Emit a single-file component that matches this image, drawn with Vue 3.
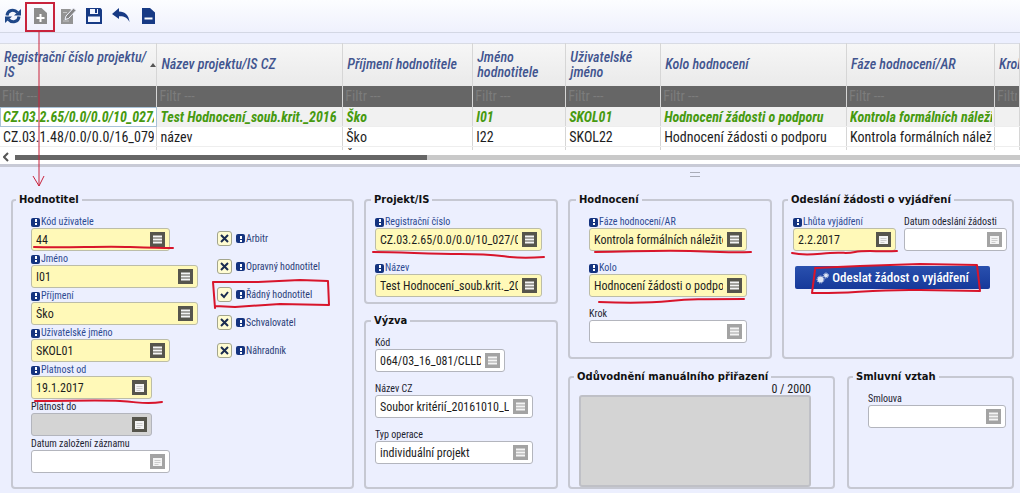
<script setup>
import { h, ref, reactive } from 'vue'

const columns = [
  { key: 'reg', title: 'Registrační číslo projektu/ IS', width: 157, sorted: true },
  { key: 'name', title: 'Název projektu/IS CZ', width: 186 },
  { key: 'surname', title: 'Příjmení hodnotitele', width: 130 },
  { key: 'first', title: 'Jméno hodnotitele', width: 93 },
  { key: 'user', title: 'Uživatelské jméno', width: 95 },
  { key: 'round', title: 'Kolo hodnocení', width: 186 },
  { key: 'phase', title: 'Fáze hodnocení/AR', width: 148 },
  { key: 'step', title: 'Krok', width: 25 }
]
const total = columns.reduce((sum, c) => sum + c.width, 0)

const rows = [
  { reg: 'CZ.03.2.65/0.0/0.0/10_027/0', name: 'Test Hodnocení_soub.krit._2016', surname: 'Ško', first: 'I01', user: 'SKOL01', round: 'Hodnocení žádosti o podporu', phase: 'Kontrola formálních náležitostí', step: '' },
  { reg: 'CZ.03.1.48/0.0/0.0/16_079/0', name: 'název', surname: 'Ško', first: 'I22', user: 'SKOL22', round: 'Hodnocení žádosti o podporu', phase: 'Kontrola formálních náležitostí', step: '' },
  { reg: '', name: '', surname: 'Ško', first: '', user: '', round: '', phase: '', step: '' }
]

const evaluator = [
  { id: 'kod', label: 'Kód uživatele', value: '44', required: true, size: 'm' },
  { id: 'jmeno', label: 'Jméno', value: 'I01', required: true, size: 'l' },
  { id: 'prijmeni', label: 'Příjmení', value: 'Ško', required: true, size: 'l' },
  { id: 'uziv', label: 'Uživatelské jméno', value: 'SKOL01', required: true, size: 'm' },
  { id: 'od', label: 'Platnost od', value: '19.1.2017', required: true, size: 's', icon: 'date' },
  { id: 'do', label: 'Platnost do', value: '', size: 's', icon: 'date', disabled: true },
  { id: 'zalozeni', label: 'Datum založení záznamu', value: '', size: 'm', icon: 'date' }
]

const roles = reactive([
  { id: 'arbitr', label: 'Arbitr', on: false },
  { id: 'opravny', label: 'Opravný hodnotitel', on: false },
  { id: 'radny', label: 'Řádný hodnotitel', on: true },
  { id: 'schval', label: 'Schvalovatel', on: false },
  { id: 'nahrad', label: 'Náhradník', on: false }
])

const reason = ref('')

const Flag = () => h('span', { class: 'flag', 'aria-hidden': 'true' }, [h('i'), h('i')])

const Field = (p) =>
  h('div', { class: ['field', 'size-' + p.size, { required: p.required, disabled: p.disabled }] }, [
    h('label', { for: p.id }, [p.required ? h(Flag) : null, p.label]),
    h('div', { class: 'box' }, [
      h('input', { id: p.id, type: 'text', value: p.value, disabled: p.disabled }),
      h('button', { type: 'button', 'aria-label': p.label, class: ['pick', p.icon === 'date' ? 'date' : 'list'] }, [
        h('svg', { viewBox: '0 0 15 15' }, p.icon === 'date'
          ? [h('path', { d: 'M3 4h9v8H3z', fill: '#f4f4f4' }), h('path', { d: 'M4.500 6.500h6M4.500 8.500h6M4.500 10.500h4', stroke: '#ccc' })]
          : [h('path', { d: 'M3 4.500h9M3 7.500h9M3 10.500h9', stroke: '#f4f4f4', 'stroke-width': 2 })])
      ])
    ])
  ])
Field.props = { id: String, label: String, value: String, required: Boolean, size: String, icon: String, disabled: Boolean }
</script>

<template>
  <div class="page">
    <header class="toolbar">
      <button type="button" aria-label="Obnovit">
        <svg viewBox="0 0 18 18" fill="none" stroke="#1f4788" stroke-width="3"><path d="M3 8.500C3.500 3 10 1.500 13.500 5.500M15 9.500C14.500 15 8 16.500 4.500 12.500" /><path d="M17 2v6.500h-7zM1 16V9.500h7z" fill="#1f4788" stroke="none" /></svg>
      </button>
      <button type="button" aria-label="Nový záznam">
        <svg viewBox="0 0 18 18"><path d="M3 1h7.500L16 6v11H3z" fill="#8c8c8c" /><path d="M9.500 7v8M5.500 11h8" stroke="#fff" stroke-width="2" /></svg>
      </button>
      <button type="button" aria-label="Upravit">
        <svg viewBox="0 0 18 18"><path d="M3 2h9l3 2v13H3z" fill="#949494" /><path d="M5 5.500h4M5 14h6" stroke="#c4c4c4" /><path d="M7 12.500l1-3.500L15.500 1 18 3.500 10.500 11.500z" fill="#858585" stroke="#f2f4ff" /></svg>
      </button>
      <button type="button" aria-label="Uložit">
        <svg viewBox="0 0 18 18"><path d="M1 1h14.500L17 2.500V17H1z" fill="#173a85" /><path d="M5 2h8v5H5zM3 9.500h12V15H3z" fill="#f4f6ff" /><path d="M10 2h2v4h-2z" fill="#173a85" /></svg>
      </button>
      <button type="button" aria-label="Zpět">
        <svg viewBox="0 0 18 18"><path d="M0 7l7-6v3.500c6 0 10 4 10.500 10.500C15 10.500 12 9 7 9.300V12z" fill="#173a85" /></svg>
      </button>
      <button type="button" aria-label="Smazat">
        <svg viewBox="0 0 18 18"><path d="M3 1h8l5 4.500V17H3z" fill="#173a85" /><path d="M5.500 11.500h8" stroke="#fff" stroke-width="2" /></svg>
      </button>
    </header>

    <section class="list">
      <div class="viewport">
        <table>
          <colgroup>
            <col v-for="c in columns" :key="c.key" :style="{ width: (c.width / total) * 100 + '%' }" />
          </colgroup>
          <thead>
            <tr class="titles">
              <th v-for="c in columns" :key="c.key" scope="col">
                <div><span>{{ c.title }}</span><i v-if="c.sorted" class="sort"></i></div>
              </th>
            </tr>
            <tr class="filters">
              <td v-for="c in columns" :key="c.key"><input type="text" placeholder="Filtr ---" :aria-label="'Filtr ' + c.title" /></td>
            </tr>
          </thead>
          <tbody>
            <tr v-for="(r, i) in rows" :key="i" :class="{ selected: i === 0 }">
              <td v-for="c in columns" :key="c.key"><div class="cell">{{ r[c.key] }}</div></td>
            </tr>
          </tbody>
        </table>
      </div>
      <div class="scroll">
        <svg viewBox="0 0 6 10"><path d="M5 1L1 5l4 4" fill="none" stroke="#555" stroke-width="2" /></svg>
        <div class="track"><div class="thumb"></div></div>
      </div>
    </section>
    <div class="splitter"><i></i></div>

    <main class="form">
      <fieldset class="evaluator">
        <legend>Hodnotitel</legend>
        <div class="fields">
          <Field v-for="f in evaluator" :key="f.id" v-bind="f" />
        </div>
        <div class="roles">
          <label v-for="r in roles" :key="r.id" class="role">
            <span class="tick">
              <input v-model="r.on" type="checkbox" />
              <svg viewBox="0 0 15 15"><path :d="r.on ? 'M4 7l3 3 4-5' : 'M4 4l7 7M11 4l-7 7'" /></svg>
            </span>
            <Flag />{{ r.label }}
          </label>
        </div>
      </fieldset>

      <div class="middle">
        <fieldset class="loose project">
          <legend>Projekt/IS</legend>
          <Field id="reg" label="Registrační číslo" value="CZ.03.2.65/0.0/0.0/10_027/0001" size="l" required />
          <Field id="nazev" label="Název" value="Test Hodnocení_soub.krit._2016" size="l" required />
        </fieldset>
        <fieldset class="loose call">
          <legend>Výzva</legend>
          <Field id="vkod" label="Kód" value="064/03_16_081/CLLD" size="xs" />
          <Field id="vnazev" label="Název CZ" value="Soubor kritérií_20161010_LK" size="ml" />
          <Field id="typ" label="Typ operace" value="individuální projekt" size="ml" />
        </fieldset>
      </div>

      <div class="right">
        <div class="pair top">
          <fieldset class="loose rating">
            <legend>Hodnocení</legend>
            <Field id="faze" label="Fáze hodnocení/AR" value="Kontrola formálních náležitostí" size="ml" required />
            <Field id="kolo" label="Kolo" value="Hodnocení žádosti o podporu" size="ml" required />
            <Field id="krok" label="Krok" value="" size="ml" />
          </fieldset>
          <fieldset class="sending">
            <legend>Odeslání žádosti o vyjádření</legend>
            <div class="dates">
              <Field id="lhuta" label="Lhůta vyjádření" value="2.2.2017" size="d" icon="date" required />
              <Field id="odesl" label="Datum odeslání žádosti" value="" size="d" icon="date" />
            </div>
            <button type="button" class="send">
              <svg viewBox="0 0 14 12"><circle cx="4.500" cy="7.500" r="3" /><circle cx="10" cy="3.500" r="2" /><circle cx="4.500" cy="7.500" r="3.500" class="teeth" /><circle cx="10" cy="3.500" r="2.500" class="teeth" /></svg>
              Odeslat žádost o vyjádření
            </button>
          </fieldset>
        </div>
        <div class="pair bottom">
          <fieldset class="reason">
            <legend>Odůvodnění manuálního přiřazení</legend>
            <div class="count">{{ reason.length }} / 2000</div>
            <textarea v-model="reason" aria-label="Odůvodnění manuálního přiřazení" disabled></textarea>
          </fieldset>
          <fieldset class="contract">
            <legend>Smluvní vztah</legend>
            <Field id="smlouva" label="Smlouva" value="" size="m" />
          </fieldset>
        </div>
      </div>
    </main>

    <svg class="marks" viewBox="0 0 1024 493" aria-hidden="true">
      <g stroke="#c8233c">
        <path d="M26 3H54V31H26z" stroke-width="2" />
        <path d="M39 31V186M33 176l6 10 5-10" stroke-width="1" />
      </g>
      <g stroke="#d8152b" stroke-width="2" stroke-linecap="round" stroke-linejoin="round">
        <path d="M34 247C70 248 100 246 130 247S160 248 173 248" />
        <path d="M35 401C70 401 100 400 120 401S145 405 162 402" />
        <path d="M213 282L258 282 300 280 328 281 329 305 280 304 235 307 215 306M213 282l2 26" />
        <path d="M373 252C400 252 430 254 460 254S500 256 510 257 530 258 544 257" />
        <path d="M595 252C630 252 650 250 690 251S730 253 751 252" />
        <path d="M599 302C625 303 650 303 670 301S700 299 744 299" />
        <path d="M792 253C805 256 815 254 830 253S845 254 855 252 880 252 897 251" />
        <path d="M815 268L860 266 920 264 977 265 980 291 920 290C870 289 850 294 812 293L815 270" />
      </g>
    </svg>
  </div>
</template>

<style>
body { background: #fff; }
.flag {
  display: inline-flex;
  flex-direction: column;
  align-items: center;
  justify-content: center;
  gap: 1px;
  flex: none;
  width: 9px;
  height: 9px;
  border-radius: 2px;
  background: #14337f;
}
.flag i { width: 2px; height: 2px; background: #fff; }
.flag i:first-child { height: 3px; }
.field { max-width: 100%; }
.field label {
  display: flex;
  align-items: center;
  gap: 1px;
  height: 12px;
  font-size: 10px;
  line-height: 12px;
  white-space: nowrap;
  color: #1c2330;
}
.field.required label { color: #2d4a92; }
.field .box {
  display: flex;
  align-items: center;
  box-sizing: border-box;
  height: 23px;
  padding: 0 4px;
  border: 1px solid #b3b5bd;
  border-radius: 3px;
  background: #fff;
}
.field.required .box { background: #fff9b8; border-color: #bcbda8; }
.field.disabled .box { background: #d4d4d4; }
.field input {
  flex: 1;
  min-width: 0;
  height: 19px;
  margin-right: 4px;
  padding: 0;
  border: 0;
  outline: 0;
  background: transparent;
  color: #1d1d1d;
  font: inherit;
  font-size: 12px;
}
.field .pick {
  flex: none;
  width: 15px;
  height: 15px;
  padding: 0;
  border: 0;
  background: #a3a3a3;
}
.field .pick svg { display: block; width: 15px; height: 15px; }
.field.required .pick, .field.disabled .pick { background: #56554c; }
.size-xs { width: 130px; }
.size-s { width: 121px; }
.size-m { width: 139px; }
.size-ml { width: 158px; }
.size-l { width: 167px; }
.size-d { width: 103px; }
</style>

<style scoped>
.page {
  position: relative;
  box-sizing: border-box;
  min-height: 100vh;
  margin-right: 4px;
  background: #eceffe;
  font-family: "Roboto Condensed", Roboto, sans-serif;
  font-size: 13px;
  color: #1d1d1d;
}
.toolbar {
  display: flex;
  align-items: center;
  gap: 9px;
  height: 32px;
  padding-left: 4px;
  border-bottom: 1px solid #d3d7e4;
  background: linear-gradient(#fcfdff, #eff1fd);
}
.toolbar button { width: 18px; height: 18px; padding: 0; border: 0; background: none; }
.toolbar svg { display: block; width: 18px; height: 18px; }
.list {
  margin-top: 10px;
  border-bottom: 3px solid #c8cad6;
  background: #fff;
}
.viewport { height: 107px; overflow: hidden; }
table { width: 100%; table-layout: fixed; border-collapse: collapse; font-size: 14px; }
th, td { padding: 0; border-right: 1px solid #d6d6d6; text-align: left; }
.titles { height: 42px; background: linear-gradient(#f6f6f6, #eaeaea); }
.titles th {
  border-top: 1px solid #d8dbe4;
  color: #42558f;
  font-weight: 500;
  font-style: italic;
  line-height: 15px;
  overflow: hidden;
}
.titles div { display: flex; align-items: center; padding-left: 4px; }
.titles span { flex: 1; }
.sort { border: 3px solid transparent; border-top: 0; border-bottom: 4px solid #555; }
.filters { height: 21px; background: #666; }
.filters input {
  display: block;
  box-sizing: border-box;
  width: 100%;
  height: 20px;
  padding: 0 2px;
  border: 0;
  background: transparent;
  font: inherit;
}
.filters input::placeholder { color: #7c7c7c; opacity: 1; }
tbody tr { height: 20px; }
tbody td { border-bottom: 1px solid #eee; }
.cell { height: 19px; margin: 0 2px 0 3px; line-height: 20px; white-space: nowrap; overflow: hidden; }
.selected { background: #f1f1f1; color: #479a10; font-weight: 700; font-style: italic; }
.selected td:first-child { outline: 1px solid #a9c3d8; outline-offset: -1px; background: #fff; }
.scroll { display: flex; align-items: center; gap: 6px; height: 14px; padding-left: 3px; }
.scroll svg { width: 6px; height: 10px; }
.track { flex: 1; height: 5px; background: #c9c9c9; }
.thumb { width: 41%; height: 5px; background: #666; }
.splitter { display: flex; justify-content: center; height: 27px; padding: 5px 0 0 370px; box-sizing: border-box; }
.splitter i { width: 10px; height: 1px; border: solid #a9acb8; border-width: 1px 0; padding: 1px 0; }
.form {
  display: grid;
  grid-template-columns: 343fr 194fr 446fr;
  gap: 10px;
  padding: 0 6px 4px 11px;
}
fieldset {
  box-sizing: border-box;
  min-width: 0;
  margin: 0;
  padding: 10px 9px 0;
  border: 2px solid #c6c8d2;
  border-radius: 4px;
}
legend {
  margin-left: -4px;
  padding: 0 3px;
  font: bold 10px/12px "DejaVu Sans", sans-serif;
  white-space: nowrap;
  color: #111;
}
.evaluator { display: flex; gap: 18px; padding: 10px 0 14px 18px; }
.evaluator legend { margin-left: -15px; }
.fields { display: flex; flex-direction: column; gap: 2px; width: 168px; }
.roles { display: flex; flex-direction: column; gap: 13px; padding-top: 15px; }
.role { display: flex; align-items: center; gap: 1px; color: #2b3e78; font-size: 10px; line-height: 15px; }
.tick { display: grid; width: 15px; height: 15px; margin-right: 3px; }
.tick > * { grid-area: 1 / 1; }
.tick input {
  appearance: none;
  width: 15px;
  height: 15px;
  margin: 0;
  border: 1px solid #a3a58d;
  border-radius: 3px;
  background: #fffcd2;
}
.tick svg { width: 15px; height: 15px; fill: none; stroke: #1b2c50; stroke-width: 2; pointer-events: none; }
.middle { display: flex; flex-direction: column; gap: 11px; }
.loose { display: flex; flex-direction: column; gap: 11px; }
.project { padding-bottom: 5px; }
.call { flex: 1; }
.right { display: flex; flex-direction: column; gap: 12px; }
.pair { display: grid; gap: 10px; }
.top { grid-template-columns: 204fr 232fr; }
.bottom { flex: 1; gap: 12px; grid-template-columns: 267fr 167fr; }
.rating { padding: 10px 19px 14px; }
.rating legend { margin-left: -13px; }
.dates { display: flex; gap: 8px; }
.sending { padding: 10px 6px 0 9px; }
.sending legend { margin-left: -5px; }
.send {
  display: flex;
  align-items: center;
  justify-content: center;
  gap: 2px;
  width: 195px;
  height: 23px;
  margin: 15px 0 0 2px;
  padding: 0;
  border: 0;
  border-radius: 2px;
  background: linear-gradient(#2950ae, #16399a);
  color: #fff;
  font: inherit;
  font-weight: 500;
}
.send svg { width: 14px; height: 12px; fill: #dfe5f5; }
.teeth { fill: none; stroke: #dfe5f5; stroke-dasharray: 1 1; }
.reason { padding: 0 22px 0 9px; }
.reason legend { margin-left: -5px; }
.count { height: 12px; text-align: right; font-size: 12px; line-height: 12px; }
textarea {
  display: block;
  box-sizing: border-box;
  width: 100%;
  height: 92px;
  border: 2px solid #bfc0c6;
  border-radius: 3px;
  background: #d4d4d4;
  resize: none;
}
.contract { padding: 10px 6px 0 19px; }
.contract legend { margin-left: -15px; }
.marks { position: absolute; top: 0; left: 0; width: 100vw; fill: none; pointer-events: none; }
</style>
